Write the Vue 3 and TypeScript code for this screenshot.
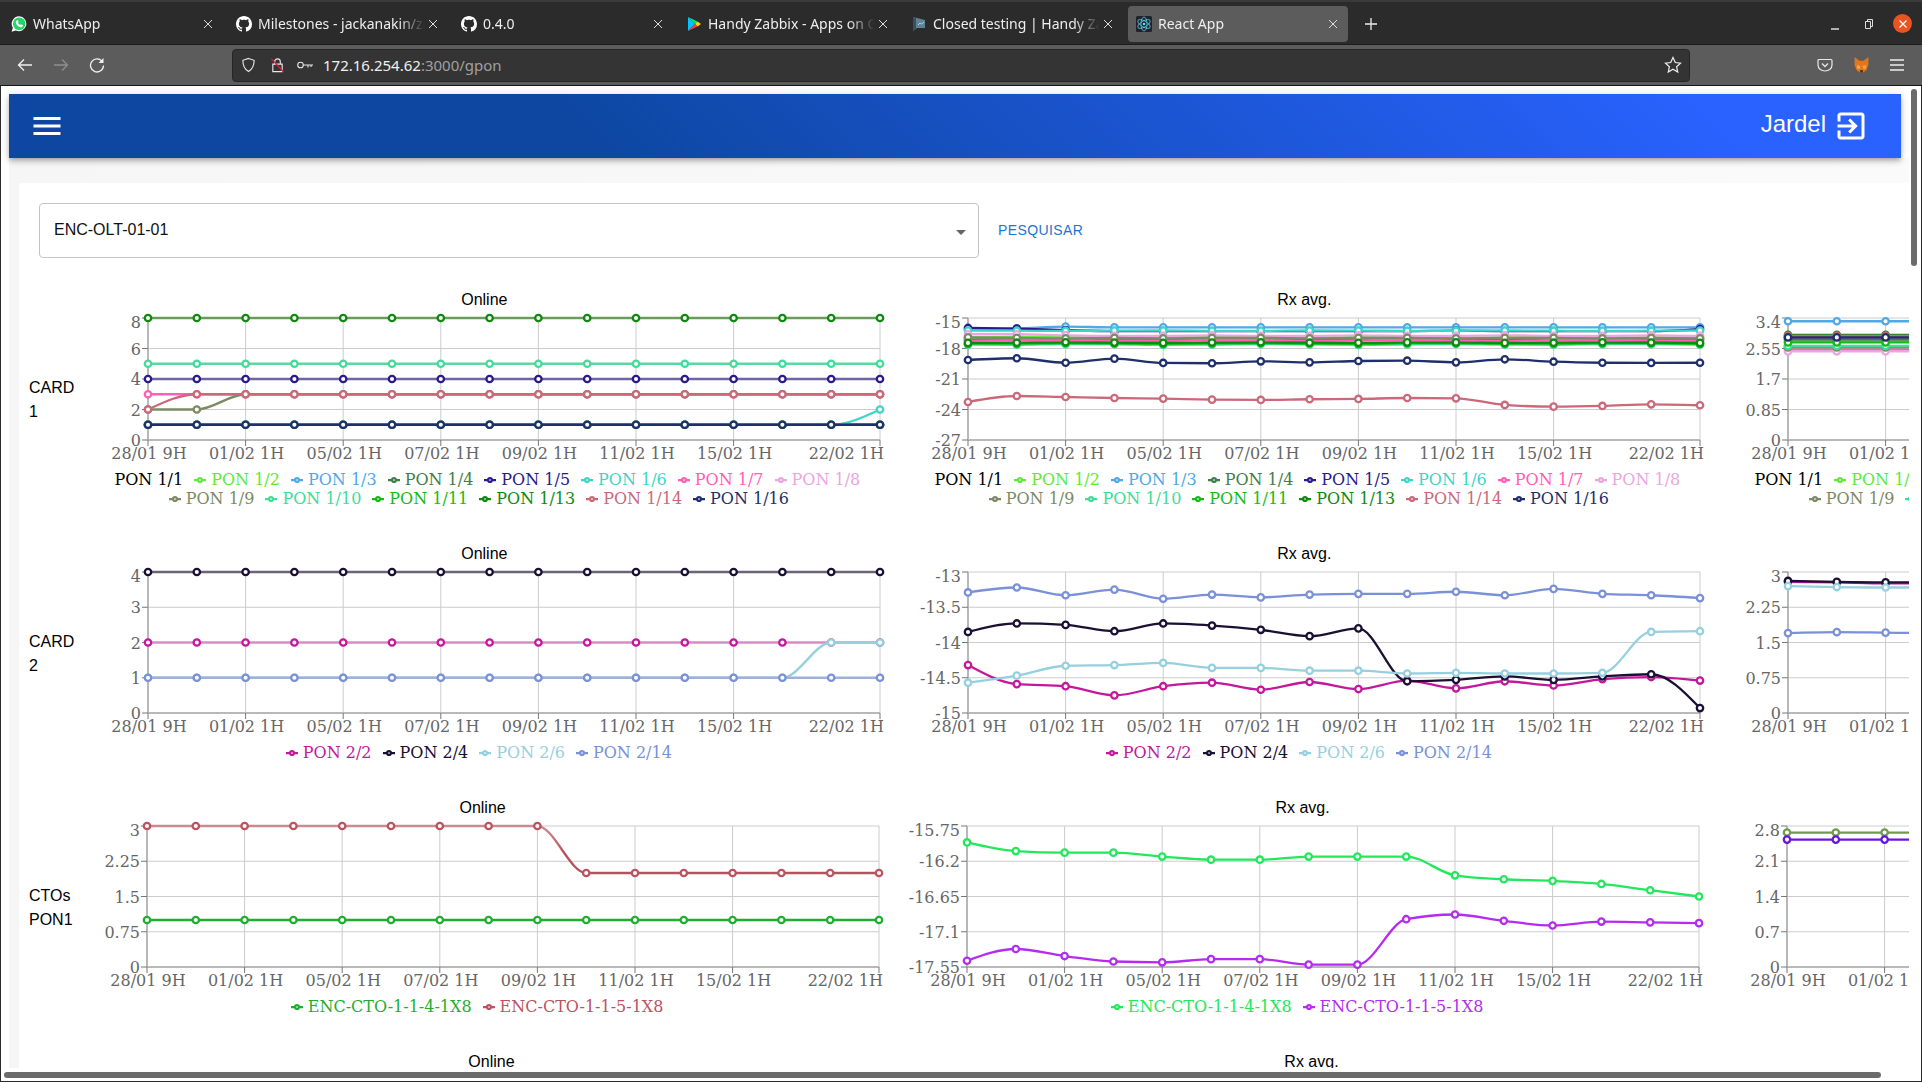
<script setup lang="ts">
interface Series {
  name: string
  color: string
  line?: string
  values: number[]
}

interface Chart {
  title: string
  ticks: number[]
  series: Series[]
}

interface Row {
  label: string
  plotHeight: number
  charts: Chart[]
}

const PLOT_LEFT = 74
const PLOT_TOP = 7
const PLOT_WIDTH = 732

const idx = Array.from({ length: 16 }, (_, i) => i)
const flat = (v: number, wobble = 0) => idx.map((i) => +(v + wobble * Math.sin(i * 1.7 + v * 3)).toFixed(2))
const steps = (first: number[], rest: number) => idx.map((i) => (i < first.length ? first[i] : rest))

const card1Meta: [string, string, string?][] = [
  ['PON 1/1', '#000000'],
  ['PON 1/2', '#62e83c'],
  ['PON 1/3', '#4fa8e8'],
  ['PON 1/4', '#3f7f4a'],
  ['PON 1/5', '#2a1a8a', '#6f64a5'],
  ['PON 1/6', '#3fd4c8'],
  ['PON 1/7', '#ff5fb4'],
  ['PON 1/8', '#eba6e0'],
  ['PON 1/9', '#7c8a66'],
  ['PON 1/10', '#3fdc9a', '#5fd6a0'],
  ['PON 1/11', '#14bb14'],
  ['PON 1/13', '#0e8a0e', '#6b9b5c'],
  ['PON 1/14', '#c9697a'],
  ['PON 1/16', '#1f2f6b'],
]

const card1 = (values: number[][], pale = true): Series[] =>
  card1Meta.map(([name, color, line], i) => ({ name, color, line: pale ? line : undefined, values: values[i] }))

const card2 = (values: number[][], pale = true): Series[] => [
  { name: 'PON 2/2', color: '#c4189c', line: pale ? '#d68cc4' : undefined, values: values[0] },
  { name: 'PON 2/4', color: '#1a1033', line: pale ? '#6a6478' : undefined, values: values[1] },
  { name: 'PON 2/6', color: '#96d0df', values: values[2] },
  { name: 'PON 2/14', color: '#7a90d8', line: pale ? '#9fb0dc' : undefined, values: values[3] },
]

const rows: Row[] = [
  {
    label: 'CARD 1',
    plotHeight: 122,
    charts: [
      {
        title: 'Online',
        ticks: [8, 6, 4, 2, 0],
        series: card1([
          [],
          flat(1),
          flat(1),
          flat(1),
          flat(4),
          steps([1, 1, 1, 1, 1, 1, 1, 1, 1, 1, 1, 1, 1, 1, 1, 2], 2),
          flat(3),
          flat(1),
          steps([2, 2], 3),
          flat(5),
          flat(1),
          flat(8),
          steps([2], 3),
          flat(1),
        ]),
      },
      {
        title: 'Rx avg.',
        ticks: [-15, -18, -21, -24, -27],
        series: card1(
          [
            [],
            flat(-16.9, 0.04),
            [-16.08, -16.02, -15.85, -15.92, -15.92, -15.92, -15.92, -15.92, -15.92, -15.92, -15.92, -15.92, -15.92, -15.92, -15.92, -15.92],
            flat(-17.1, 0.04),
            [-15.98, -16.05, -16.2, -16.3, -16.3, -16.3, -16.3, -16.3, -16.3, -16.3, -16.25, -16.3, -16.3, -16.3, -16.3, -16.1],
            flat(-16.25, 0.02),
            flat(-17.2, 0.05),
            [-16.6, -16.6, -16.7, -16.75, -16.75, -16.7, -16.75, -16.75, -16.7, -16.75, -16.75, -16.7, -16.75, -16.75, -16.7, -16.75],
            [-16.9, -16.95, -17.0, -16.95, -17.0, -16.95, -16.95, -17.0, -16.95, -16.95, -17.0, -16.95, -16.95, -17.0, -16.95, -17.0],
            flat(-17.6, 0.04),
            flat(-17.5, 0.04),
            flat(-17.42, 0.03),
            [-23.26, -22.67, -22.77, -22.87, -22.93, -23.03, -23.06, -22.99, -22.96, -22.87, -22.9, -23.55, -23.72, -23.65, -23.49, -23.58],
            [-19.13, -18.96, -19.4, -19.0, -19.42, -19.45, -19.26, -19.36, -19.23, -19.2, -19.36, -19.06, -19.3, -19.4, -19.42, -19.4],
          ],
          false,
        ),
      },
      {
        title: 'Tx avg.',
        ticks: [3.4, 2.55, 1.7, 0.85, 0],
        series: card1(
          [
            [],
            flat(2.74),
            flat(3.31),
            flat(2.8),
            flat(2.86),
            flat(2.6),
            flat(2.52),
            flat(2.47),
            flat(2.58),
            flat(2.62),
            flat(2.72),
            flat(2.93),
            flat(2.9),
            flat(2.86),
          ],
          false,
        ),
      },
    ],
  },
  {
    label: 'CARD 2',
    plotHeight: 141,
    charts: [
      {
        title: 'Online',
        ticks: [4, 3, 2, 1, 0],
        series: card2([flat(2), flat(4), steps([1, 1, 1, 1, 1, 1, 1, 1, 1, 1, 1, 1, 1, 1], 2), flat(1)]),
      },
      {
        title: 'Rx avg.',
        ticks: [-13, -13.5, -14, -14.5, -15],
        series: card2(
          [
            [-14.32, -14.59, -14.62, -14.75, -14.62, -14.57, -14.67, -14.56, -14.66, -14.54, -14.65, -14.55, -14.61, -14.52, -14.49, -14.54],
            [-13.85, -13.73, -13.75, -13.84, -13.73, -13.76, -13.82, -13.91, -13.8, -14.55, -14.53, -14.48, -14.53, -14.48, -14.45, -14.93],
            [-14.57, -14.47, -14.33, -14.32, -14.29, -14.36, -14.36, -14.4, -14.4, -14.44, -14.43, -14.44, -14.44, -14.43, -13.85, -13.84],
            [-13.29, -13.22, -13.33, -13.25, -13.38, -13.32, -13.36, -13.32, -13.31, -13.31, -13.28, -13.33, -13.24, -13.31, -13.33, -13.37],
          ],
          false,
        ),
      },
      {
        title: 'Tx avg.',
        ticks: [3, 2.25, 1.5, 0.75, 0],
        series: card2(
          [
            steps([2.79, 2.78, 2.76], 2.76),
            steps([2.81, 2.79, 2.78], 2.78),
            steps([2.7, 2.68, 2.67], 2.67),
            steps([1.7, 1.72, 1.71], 1.7),
          ],
          false,
        ),
      },
    ],
  },
  {
    label: 'CTOs PON1',
    plotHeight: 141,
    charts: [
      {
        title: 'Online',
        ticks: [3, 2.25, 1.5, 0.75, 0],
        series: [
          { name: 'ENC-CTO-1-1-4-1X8', color: '#1fae2f', values: flat(1) },
          {
            name: 'ENC-CTO-1-1-5-1X8',
            color: '#bd5260',
            line: 'url(#cto-fade)',
            values: steps([3, 3, 3, 3, 3, 3, 3, 3, 3], 2),
          },
        ],
      },
      {
        title: 'Rx avg.',
        ticks: [-15.75, -16.2, -16.65, -17.1, -17.55],
        series: [
          {
            name: 'ENC-CTO-1-1-4-1X8',
            color: '#22e85c',
            values: [-15.96, -16.07, -16.09, -16.09, -16.14, -16.18, -16.18, -16.14, -16.14, -16.14, -16.38, -16.43, -16.45, -16.49, -16.57, -16.65],
          },
          {
            name: 'ENC-CTO-1-1-5-1X8',
            color: '#b52cf0',
            values: [-17.47, -17.32, -17.41, -17.48, -17.49, -17.45, -17.45, -17.52, -17.52, -16.94, -16.88, -16.96, -17.02, -16.97, -16.98, -16.99],
          },
        ],
      },
      {
        title: 'Tx avg.',
        ticks: [2.8, 2.1, 1.4, 0.7, 0],
        series: [
          { name: 'ENC-CTO-1-1-4-1X8', color: '#6f9a4f', values: flat(2.67) },
          { name: 'ENC-CTO-1-1-5-1X8', color: '#6a14e0', values: flat(2.53) },
        ],
      },
    ],
  },
  {
    label: 'CTOs PON16',
    plotHeight: 0,
    charts: [
      { title: 'Online', ticks: [], series: [] },
      { title: 'Rx avg.', ticks: [], series: [] },
    ],
  },
]

const xLabels: [number, string][] = [
  [0, '28/01 9H'],
  [2, '01/02 1H'],
  [4, '05/02 1H'],
  [6, '07/02 1H'],
  [8, '09/02 1H'],
  [10, '11/02 1H'],
  [12, '15/02 1H'],
  [15, '22/02 1H'],
]

const xAt = (i: number) => PLOT_LEFT + (PLOT_WIDTH * i) / 15

function yAt(chart: Chart, h: number, v: number) {
  const max = chart.ticks[0]
  const min = chart.ticks[chart.ticks.length - 1]
  return PLOT_TOP + ((max - v) / (max - min)) * h
}

const sign = (x: number) => (x < 0 ? -1 : 1)

// same curve as d3 curveMonotoneX
function monotone(pts: [number, number][]) {
  const n = pts.length
  const t: number[] = new Array(n).fill(0)
  for (let i = 1; i < n - 1; i++) {
    const h0 = pts[i][0] - pts[i - 1][0]
    const h1 = pts[i + 1][0] - pts[i][0]
    const s0 = (pts[i][1] - pts[i - 1][1]) / h0
    const s1 = (pts[i + 1][1] - pts[i][1]) / h1
    const p = (s0 * h1 + s1 * h0) / (h0 + h1)
    t[i] = (sign(s0) + sign(s1)) * Math.min(Math.abs(s0), Math.abs(s1), 0.5 * Math.abs(p)) || 0
  }
  const ends = (a: number, b: number, inner: number) => {
    const h = pts[b][0] - pts[a][0]
    return (3 * (pts[b][1] - pts[a][1])) / h / 2 - inner / 2
  }
  t[0] = ends(0, 1, t[1])
  t[n - 1] = ends(n - 2, n - 1, t[n - 2])
  let d = `M${pts[0][0]},${pts[0][1]}`
  for (let i = 0; i < n - 1; i++) {
    const dx = (pts[i + 1][0] - pts[i][0]) / 3
    d += `C${pts[i][0] + dx},${pts[i][1] + dx * t[i]},${pts[i + 1][0] - dx},${pts[i + 1][1] - dx * t[i + 1]},${pts[i + 1][0]},${pts[i + 1][1]}`
  }
  return d
}

const points = (chart: Chart, h: number, s: Series): [number, number][] =>
  s.values.map((v, i) => [xAt(i), yAt(chart, h, v)])

const tabs = [
  { title: 'WhatsApp', icon: 'whatsapp' },
  { title: 'Milestones - jackanakin/zabbix', icon: 'github' },
  { title: '0.4.0', icon: 'github' },
  { title: 'Handy Zabbix - Apps on Google Play', icon: 'play' },
  { title: 'Closed testing | Handy Zabbix', icon: 'console' },
  { title: 'React App', icon: 'react', active: true },
]

const githubPath =
  'M8 0C3.58 0 0 3.58 0 8c0 3.54 2.29 6.53 5.47 7.59.4.07.55-.17.55-.38 0-.19-.01-.82-.01-1.49-2.01.37-2.53-.49-2.69-.94-.09-.23-.48-.94-.82-1.13-.28-.15-.68-.52-.01-.53.63-.01 1.08.58 1.23.82.72 1.21 1.87.87 2.33.66.07-.52.28-.87.51-1.07-1.78-.2-3.64-.89-3.64-3.95 0-.87.31-1.59.82-2.15-.08-.2-.36-1.02.08-2.12 0 0 .67-.21 2.2.82.64-.18 1.32-.27 2-.27.68 0 1.36.09 2 .27 1.53-1.04 2.2-.82 2.2-.82.44 1.1.16 1.92.08 2.12.51.56.82 1.27.82 2.15 0 3.07-1.87 3.75-3.65 3.95.29.25.54.73.54 1.48 0 1.07-.01 1.93-.01 2.2 0 .21.15.46.55.38A8.013 8.013 0 0016 8c0-4.42-3.58-8-8-8z'
</script>

<template>
  <div class="screen">
    <div class="tabbar">
      <div v-for="tab in tabs" :key="tab.title" class="tab" :class="{ active: tab.active }">
        <svg class="favicon" viewBox="0 0 16 16">
          <template v-if="tab.icon === 'whatsapp'">
            <path d="M8.200 0.300a7.500 7.500 0 0 0-6.400 11.400L0.600 15.700l4.100-1.100A7.500 7.500 0 1 0 8.200 .3z" fill="#fff" />
            <circle cx="8.200" cy="7.800" r="6.300" fill="#25d366" />
            <path d="M5.900 4.300c.3-.3.8-.3 1 .1l.6 1.200c.1.300 0 .5-.2.700l-.4.5c.5 1 1.300 1.800 2.400 2.300l.5-.5c.2-.2.5-.3.7-.1l1.200.6c.4.200.4.6.2 1-.4.8-1.200 1.200-2 1.100C7.600 11.300 5.100 8.800 4.800 6.500c-.1-.9.4-1.700 1.100-2.200z" fill="#fff" />
          </template>
          <path v-else-if="tab.icon === 'github'" :d="githubPath" fill="#fff" />
          <template v-else-if="tab.icon === 'play'">
            <polygon points="2,1 2,15 9,8" fill="#00c3ff" />
            <polygon points="2,1 9,8 11.500,5.500" fill="#00e676" />
            <polygon points="11.500,5.500 15,8 11.500,10.500 9,8" fill="#ffd400" />
            <polygon points="2,15 9,8 11.500,10.500" fill="#ff3a44" />
          </template>
          <template v-else-if="tab.icon === 'console'">
            <polygon points="2,1 14,4 14,12 6,12 2,15" fill="#5f8296" />
            <polygon points="2,1 5,2 5,12.500 2,15" fill="#36505f" />
            <path d="M7 9l2-2 1.500 1L13 6" stroke="#cfe3ee" stroke-width=".8" fill="none" />
          </template>
          <template v-else>
            <rect width="16" height="16" rx="1.500" fill="#20232a" />
            <g fill="none" stroke="#61dafb" stroke-width=".7">
              <ellipse cx="8" cy="8" rx="3" ry="7" />
              <ellipse cx="8" cy="8" rx="3" ry="7" transform="rotate(60 8 8)" />
              <ellipse cx="8" cy="8" rx="3" ry="7" transform="rotate(120 8 8)" />
            </g>
            <circle cx="8" cy="8" r="1.300" fill="#61dafb" />
          </template>
        </svg>
        <span class="tab-title">{{ tab.title }}</span>
        <svg class="tab-close" viewBox="0 0 10 10">
          <path d="M1 1l8 8M9 1l-8 8" stroke="#dddddd" stroke-width="1" fill="none" />
        </svg>
      </div>
      <svg class="new-tab" viewBox="0 0 12 12">
        <path d="M6 0v12M0 6h12" stroke="#eeeeee" stroke-width="1.300" fill="none" />
      </svg>
      <div class="window-controls">
        <svg class="win-min" viewBox="0 0 8 8"><path d="M0 7h8" stroke="#ddd" stroke-width="1.500" /></svg>
        <svg class="win-max" viewBox="0 0 8 10">
          <path d="M.5 2.500h5v7h-5zM2.500 2.500V.5h5v7h-2" stroke="#ddd" fill="none" />
        </svg>
        <div class="win-close">
          <svg viewBox="0 0 10 10"><path d="M1.500 1.500l7 7M8.500 1.500l-7 7" stroke="#fff" stroke-width="1.200" /></svg>
        </div>
      </div>
    </div>

    <div class="toolbar">
      <svg class="nav-icon first" viewBox="0 0 16 16">
        <path d="M15 8H1.500M7 2.500L1.500 8 7 13.500" stroke="#f0f0f0" stroke-width="1.300" fill="none" />
      </svg>
      <svg class="nav-icon" viewBox="0 0 16 16">
        <path d="M1 8h13.500M9 2.500L14.500 8 9 13.500" stroke="#8e8e8e" stroke-width="1.300" fill="none" />
      </svg>
      <svg class="nav-icon" viewBox="0 0 16 16">
        <path d="M13.500 5A6.500 6.500 0 1 0 14.500 8.500" stroke="#f0f0f0" stroke-width="1.300" fill="none" />
        <path d="M14.500 1v5h-5z" fill="#f0f0f0" />
      </svg>
      <div class="urlbar">
        <svg class="url-icon" viewBox="0 0 16 16">
          <path d="M8 1l6 2c0 6-1.500 9.500-6 12C3.500 12.500 2 9 2 3z" stroke="#e8e8e8" stroke-width="1.200" fill="none" />
        </svg>
        <svg class="url-icon lock" viewBox="0 0 16 16">
          <path d="M5 7V4.500a3 3 0 0 1 6 0V7M3 7h10v8H3z" stroke="#e8e8e8" stroke-width="1.200" fill="none" />
          <path d="M1.500 1.500l13 14" stroke="#e2183c" stroke-width="1.400" />
        </svg>
        <svg class="url-icon key" viewBox="0 0 16 10">
          <circle cx="3.500" cy="5" r="2.800" stroke="#e8e8e8" stroke-width="1.100" fill="none" />
          <path d="M6.300 5H16M11 5v2.500M14 5v2" stroke="#e8e8e8" stroke-width="1.100" fill="none" />
        </svg>
        <span class="url-text">172.16.254.62<span class="url-dim">:3000/gpon</span></span>
        <svg class="url-star" viewBox="0 0 18 18">
          <path d="M9 1.500l2.300 5 5.200.6-3.900 3.600 1.100 5.300L9 13.300 4.300 16l1.100-5.300L1.500 7.100l5.200-.6z" stroke="#eeeeee" stroke-width="1.200" fill="none" />
        </svg>
      </div>
      <svg class="ext-icon pocket" viewBox="0 0 16 16">
        <path d="M2 2.500h12c.6 0 1 .4 1 1V8c0 3.500-3 6-7 6s-7-2.500-7-6V3.500c0-.6.4-1 1-1z" stroke="#e8e8e8" stroke-width="1.200" fill="none" />
        <path d="M5 6.500l3 3 3-3" stroke="#e8e8e8" stroke-width="1.300" fill="none" />
      </svg>
      <svg class="ext-icon fox" viewBox="0 0 16 16">
        <polygon points="1.500,0.500 6,4 10,4 14.500,0.500 14.500,8 12.500,13 9.500,15 6.500,15 3.500,13 1.500,8" fill="#e2761b" />
        <polygon points="4,8 7,9 6,12 3.500,11" fill="#f6a24e" />
        <polygon points="12,8 9,9 10,12 12.500,11" fill="#f6a24e" />
        <polygon points="6.500,13 9.500,13 9,15 7,15" fill="#3b2a20" />
      </svg>
      <svg class="ext-icon burger" viewBox="0 0 14 12">
        <path d="M0 1h14M0 6h14M0 11h14" stroke="#eeeeee" stroke-width="1.300" />
      </svg>
    </div>

    <div class="viewport">
      <div class="page-column">
        <div class="page-main">
          <header class="appbar">
            <svg class="appbar-menu" viewBox="0 0 24 24">
              <path d="M3 18h18v-2H3v2zm0-5h18v-2H3v2zm0-7v2h18V6H3z" fill="#fff" />
            </svg>
            <div class="appbar-user">Jardel</div>
            <svg class="appbar-exit" viewBox="0 0 24 24">
              <path
                d="M10.090 15.590L11.500 17l5-5-5-5-1.410 1.410L12.670 11H3v2h9.670l-2.580 2.590zM19 3H5c-1.110 0-2 .9-2 2v4h2V5h14v14H5v-4H3v4c0 1.100.89 2 2 2h14c1.100 0 2-.9 2-2V5c0-1.100-.9-2-2-2z"
                fill="#fff"
              />
            </svg>
          </header>

          <div class="content">
            <main class="card">
              <div class="search">
                <div class="select">
                  <span class="select-value">ENC-OLT-01-01</span>
                  <span class="select-arrow"></span>
                </div>
                <span class="search-button">PESQUISAR</span>
              </div>

              <section v-for="row in rows" :key="row.label" class="row">
                <div class="row-label">{{ row.label }}</div>
                <div v-for="chart in row.charts" :key="chart.title" class="chart">
                  <div class="chart-title">{{ chart.title }}</div>
                  <svg
                    v-if="row.plotHeight"
                    class="plot"
                    width="820"
                    :height="row.plotHeight + PLOT_TOP + 30"
                  >
                    <defs>
                      <linearGradient id="cto-fade" gradientUnits="userSpaceOnUse" :x1="PLOT_LEFT" x2="806" y1="0" y2="0">
                        <stop offset="0.545" stop-color="#cb8a90" />
                        <stop offset="0.57" stop-color="#b5525e" />
                      </linearGradient>
                    </defs>
                    <g class="grid">
                      <line
                        v-for="t in chart.ticks"
                        :key="t"
                        :x1="PLOT_LEFT"
                        :x2="PLOT_LEFT + PLOT_WIDTH"
                        :y1="yAt(chart, row.plotHeight, t)"
                        :y2="yAt(chart, row.plotHeight, t)"
                      />
                      <line
                        v-for="[i] in xLabels"
                        :key="i"
                        :x1="xAt(i)"
                        :x2="xAt(i)"
                        :y1="PLOT_TOP"
                        :y2="PLOT_TOP + row.plotHeight"
                      />
                    </g>
                    <g class="axis">
                      <line :x1="PLOT_LEFT" :x2="PLOT_LEFT" :y1="PLOT_TOP" :y2="PLOT_TOP + row.plotHeight" />
                      <line
                        :x1="PLOT_LEFT"
                        :x2="PLOT_LEFT + PLOT_WIDTH"
                        :y1="PLOT_TOP + row.plotHeight"
                        :y2="PLOT_TOP + row.plotHeight"
                      />
                    </g>
                    <g class="ticks">
                      <line
                        v-for="t in chart.ticks"
                        :key="t"
                        :x1="PLOT_LEFT - 6"
                        :x2="PLOT_LEFT"
                        :y1="yAt(chart, row.plotHeight, t)"
                        :y2="yAt(chart, row.plotHeight, t)"
                      />
                      <line
                        v-for="[i] in xLabels"
                        :key="i"
                        :x1="xAt(i)"
                        :x2="xAt(i)"
                        :y1="PLOT_TOP + row.plotHeight"
                        :y2="PLOT_TOP + row.plotHeight + 6"
                      />
                    </g>
                    <g class="tick-text">
                      <text
                        v-for="(t, n) in chart.ticks"
                        :key="t"
                        :x="PLOT_LEFT - 7"
                        :y="yAt(chart, row.plotHeight, t) + (n === 0 ? 10 : 6)"
                        text-anchor="end"
                      >{{ t }}</text>
                      <text
                        v-for="[i, text] in xLabels"
                        :key="i"
                        :x="i === 15 ? xAt(i) + 4 : xAt(i) + 1"
                        :y="PLOT_TOP + row.plotHeight + 19"
                        :text-anchor="i === 15 ? 'end' : 'middle'"
                      >{{ text }}</text>
                    </g>
                    <g v-for="s in chart.series" :key="s.name">
                      <template v-if="s.values.length">
                        <path class="series-line" :d="monotone(points(chart, row.plotHeight, s))" :stroke="s.line || s.color" />
                        <circle
                          v-for="([cx, cy], i) in points(chart, row.plotHeight, s)"
                          :key="i"
                          class="series-dot"
                          :cx="cx"
                          :cy="cy"
                          r="3.200"
                          :stroke="s.color"
                        />
                      </template>
                    </g>
                  </svg>
                  <div v-if="chart.series.length" class="legend">
                    <span v-for="s in chart.series" :key="s.name" class="legend-item" :style="{ color: s.color }">
                      <svg class="legend-icon" viewBox="0 0 32 32">
                        <path
                          d="M0,16h10.670A5.330,5.330,0,1,1,21.330,16H32M21.330,16A5.330,5.330,0,1,1,10.670,16"
                          fill="none"
                          stroke-width="6"
                          :stroke="s.values.length ? s.color : '#fff'"
                        />
                      </svg>
                      {{ s.name }}
                    </span>
                  </div>
                </div>
              </section>
            </main>
          </div>
        </div>
        <div class="hscroll"><div class="hscroll-thumb"></div></div>
      </div>
      <div class="vscroll"><div class="vscroll-thumb"></div></div>
    </div>
  </div>
</template>

<style scoped>
.screen {
  width: 1922px;
  height: 1082px;
  display: flex;
  flex-direction: column;
  overflow: hidden;
  background: #fff;
  font-family: "Liberation Sans", Arial, sans-serif;
}

.tabbar {
  height: 45px;
  flex: none;
  box-sizing: border-box;
  display: flex;
  align-items: center;
  gap: 5px;
  padding: 1px 0 0 3px;
  background: #2b2b2b;
  border-top: 2px solid #3a3a3a;
  border-bottom: 1px solid #1c1c1c;
  font-family: "Noto Sans", sans-serif;
  font-size: 14px;
  color: #eeeeee;
}

.tab {
  width: 220px;
  height: 36px;
  flex: none;
  box-sizing: border-box;
  display: flex;
  align-items: center;
  padding: 0 10px 0 8px;
  border-radius: 4px;
}

.tab.active {
  background: #5c5c5c;
}

.favicon {
  width: 16px;
  height: 16px;
  flex: none;
  margin-right: 6px;
}

.tab-title {
  flex: 1;
  min-width: 0;
  white-space: nowrap;
  overflow: hidden;
  -webkit-mask-image: linear-gradient(to right, #000 84%, transparent 100%);
  mask-image: linear-gradient(to right, #000 84%, transparent 100%);
}

.tab-close {
  width: 10px;
  height: 10px;
  flex: none;
  margin-left: 3px;
}

.new-tab {
  width: 12px;
  height: 12px;
  margin-left: 12px;
}

.window-controls {
  margin-left: auto;
  display: flex;
  align-items: center;
  padding-right: 10px;
}

.win-min {
  width: 8px;
  height: 8px;
  margin-right: 26px;
  margin-top: 5px;
}

.win-max {
  width: 8px;
  height: 10px;
  margin-right: 20px;
}

.win-close {
  width: 19px;
  height: 19px;
  border-radius: 50%;
  background: #e95420;
  display: flex;
  align-items: center;
  justify-content: center;
}

.win-close svg {
  width: 10px;
  height: 10px;
}

.toolbar {
  height: 41px;
  flex: none;
  box-sizing: border-box;
  display: flex;
  align-items: center;
  background: #5c5c5c;
  border-bottom: 1px solid #151515;
  font-family: "Noto Sans", sans-serif;
}

.nav-icon {
  width: 16px;
  height: 16px;
  margin-left: 20px;
  flex: none;
}

.nav-icon.first {
  margin-left: 17px;
}

.urlbar {
  width: 1458px;
  height: 33px;
  margin-left: 127px;
  flex: none;
  box-sizing: border-box;
  display: flex;
  align-items: center;
  padding: 0 7px 0 8px;
  background: #343434;
  border: 1px solid #262626;
  border-radius: 4px;
  font-size: 15px;
  color: #f0f0f0;
}

.url-icon {
  width: 15px;
  height: 16px;
  flex: none;
  margin-right: 14px;
}

.url-icon.key {
  height: 10px;
  width: 16px;
  margin-right: 10px;
  margin-left: -2px;
}

.url-text {
  flex: 1;
}

.url-dim {
  color: #a0a0a0;
}

.url-star {
  width: 18px;
  height: 18px;
}

.ext-icon {
  flex: none;
}

.pocket {
  width: 16px;
  height: 16px;
  margin-left: 127px;
}

.fox {
  width: 17px;
  height: 18px;
  margin-left: 20px;
}

.burger {
  width: 14px;
  height: 12px;
  margin-left: 20px;
}

.viewport {
  flex: 1;
  min-height: 0;
  display: flex;
  border-left: 1px solid #2b2b2b;
  border-right: 1px solid #2b2b2b;
  border-bottom: 1px solid #2b2b2b;
}

.page-column {
  width: 1908px;
  flex: none;
  display: flex;
  flex-direction: column;
}

.page-main {
  flex: 1;
  min-height: 0;
  overflow: hidden;
  padding-top: 8px;
}

.appbar {
  height: 64px;
  margin: 0 8px;
  box-sizing: border-box;
  display: flex;
  align-items: center;
  padding: 0 32px 0 20px;
  background: linear-gradient(45deg, #0d47a1 30%, #2962ff 90%);
  box-shadow: 0 2px 4px -1px rgba(0, 0, 0, 0.2), 0 4px 5px 0 rgba(0, 0, 0, 0.14), 0 1px 10px 0 rgba(0, 0, 0, 0.12);
  position: relative;
}

.appbar-menu {
  width: 36px;
  height: 36px;
}

.appbar-user {
  margin-left: auto;
  margin-right: 7px;
  margin-top: -5px;
  color: #fff;
  font-size: 24px;
}

.appbar-exit {
  width: 36px;
  height: 36px;
}

.content {
  margin-left: 8px;
  padding: 25px 0 0 10px;
  background: linear-gradient(to right, #f6f6f6, #fcfcfc);
  width: 2600px;
  min-height: 100%;
}

.card {
  background: #fff;
  border-radius: 4px;
  padding-left: 10px;
  min-height: 920px;
}

.search {
  display: flex;
  align-items: center;
  padding: 20px 0 31px 10px;
}

.select {
  width: 940px;
  height: 55px;
  box-sizing: border-box;
  display: flex;
  align-items: center;
  justify-content: space-between;
  padding: 0 12px 0 14px;
  border: 1px solid #c4c4c4;
  border-radius: 4px;
  font-size: 16px;
  color: #111;
}

.select-value {
  margin-top: -2px;
}

.select-arrow {
  width: 0;
  height: 0;
  margin-top: 3px;
  border-left: 5px solid transparent;
  border-right: 5px solid transparent;
  border-top: 5px solid #666;
}

.search-button {
  margin-left: 19px;
  margin-top: -2px;
  color: #1976d2;
  font-size: 14px;
  letter-spacing: 0.4px;
}

.row {
  display: flex;
  align-items: center;
  height: 221px;
  margin-bottom: 33px;
}

.row-label {
  width: min-content;
  flex: none;
  font-size: 16px;
  line-height: 24px;
  color: #000;
}

.chart {
  width: 820px;
  height: 221px;
  flex: none;
}

.chart-title {
  height: 22px;
  line-height: 22px;
  text-align: center;
  font-size: 16px;
  color: #000;
}

.plot {
  display: block;
  font-family: "DejaVu Serif", serif;
  font-size: 16px;
}

.grid line {
  stroke: #cccccc;
  stroke-width: 1;
}

.axis line {
  stroke: #b8b8b8;
  stroke-width: 2;
}

.ticks line {
  stroke: #777777;
  stroke-width: 1;
}

.tick-text text {
  fill: #666666;
}

.series-line {
  fill: none;
  stroke-width: 2.300;
}

.series-dot {
  fill: #fff;
  stroke-width: 2.300;
}

.legend {
  display: flex;
  flex-wrap: wrap;
  justify-content: center;
  font-family: "DejaVu Serif", serif;
  font-size: 16px;
  line-height: 19px;
}

.legend-item {
  display: inline-flex;
  align-items: center;
  margin-right: 11px;
  white-space: nowrap;
}

.legend-icon {
  width: 12px;
  height: 12px;
  margin-right: 5px;
  flex: none;
}

.hscroll {
  height: 13px;
  flex: none;
  background: #fff;
  padding: 4px 0 0 3px;
  box-sizing: border-box;
}

.hscroll-thumb {
  width: 1877px;
  height: 6px;
  border-radius: 3px;
  background: #6b6b6b;
}

.vscroll {
  flex: 1;
  background: #fff;
  padding: 3px 0 0 2px;
}

.vscroll-thumb {
  width: 6px;
  height: 177px;
  border-radius: 3px;
  background: #6b6b6b;
}
</style>

<style>
html,
body {
  margin: 0;
  overflow: hidden;
}
</style>
